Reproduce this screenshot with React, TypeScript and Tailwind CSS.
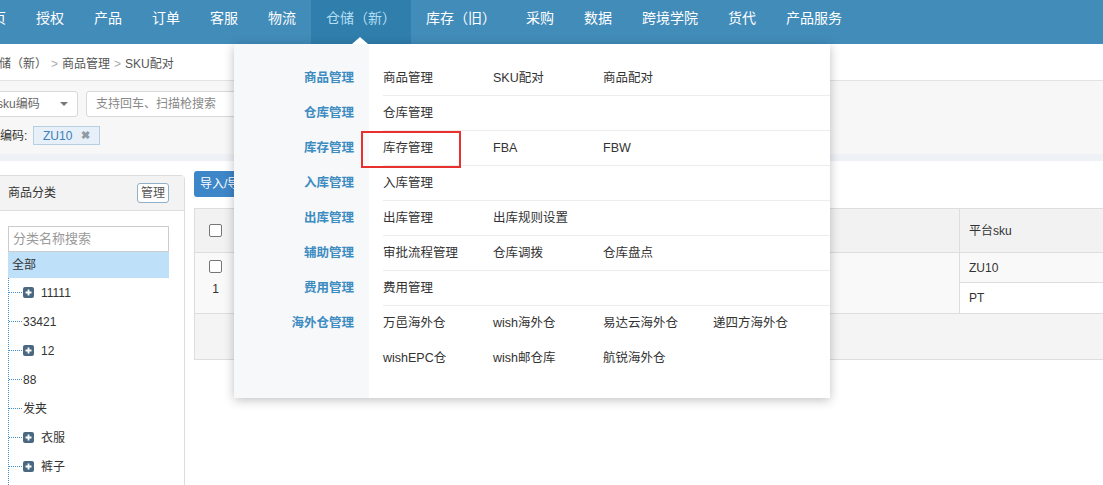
import { useState } from "react";

const navItems = ["首页", "授权", "产品", "订单", "客服", "物流", "仓储（新）", "库存（旧）", "采购", "数据", "跨境学院", "货代", "产品服务"];

const menuGroups = [
  { label: "商品管理", items: ["商品管理", "SKU配对", "商品配对"] },
  { label: "仓库管理", items: ["仓库管理"] },
  { label: "库存管理", items: ["库存管理", "FBA", "FBW"] },
  { label: "入库管理", items: ["入库管理"] },
  { label: "出库管理", items: ["出库管理", "出库规则设置"] },
  { label: "辅助管理", items: ["审批流程管理", "仓库调拨", "仓库盘点"] },
  { label: "费用管理", items: ["费用管理"] },
  { label: "海外仓管理", items: ["万邑海外仓", "wish海外仓", "易达云海外仓", "递四方海外仓", "wishEPC仓", "wish邮仓库", "航锐海外仓"] },
];

const treeItems = [
  { name: "11111", plus: true },
  { name: "33421", plus: false },
  { name: "12", plus: true },
  { name: "88", plus: false },
  { name: "发夹", plus: false },
  { name: "衣服", plus: true },
  { name: "裤子", plus: true },
];

function PlusBox() {
  return (
    <span className="w-[11px] h-[11px] rounded-[2px] bg-[#4a6882] flex items-center justify-center">
      <svg width="7" height="7" viewBox="0 0 7 7">
        <path d="M3.5 0.5v6M0.5 3.5h6" stroke="white" strokeWidth="1.8" />
      </svg>
    </span>
  );
}

function Checkbox() {
  return <span className="block w-[13px] h-[13px] rounded-[2px] border border-[#767676] bg-white" />;
}

function Dropdown() {
  return (
    <div className="absolute left-[234px] top-[44px] z-20 w-[596px] bg-[linear-gradient(90deg,#f7f8fa_135px,#ffffff_135px)] pt-[17px] pb-[22px] shadow-[0_2px_10px_rgba(0,0,0,0.25)]">
      <span className="absolute -top-[7px] left-[118px] w-0 h-0 border-l-[8px] border-r-[8px] border-b-[7px] border-l-transparent border-r-transparent border-b-white" />
      {menuGroups.map((g, gi) => {
        const last = gi === menuGroups.length - 1;
        return (
          <div key={g.label} className="flex items-start">
            <div className="w-[135px] shrink-0 h-[35px] flex items-center justify-end pr-[15px] text-[12.5px] font-bold text-[#3d8cc1]">
              {g.label}
            </div>
            <div className={"flex-1 ml-[14px] flex flex-wrap " + (last ? "" : "border-b border-[#ececec]")}>
              {g.items.map((it) => (
                <div
                  key={it}
                  className={
                    "relative w-[110px] flex items-center text-[12.5px] text-[#333] " +
                    (last ? "h-[35px]" : "h-[34px]")
                  }
                >
                  {it}
                  {gi === 2 && it === "库存管理" && (
                    <span className="absolute -left-[22px] top-[0px] w-[100px] h-[37px] border-2 border-[#e8312f]" />
                  )}
                </div>
              ))}
            </div>
          </div>
        );
      })}
    </div>
  );
}

export default function App() {
  const [active] = useState("仓储（新）");

  return (
    <div className="relative w-[1103px] h-[485px] overflow-hidden bg-white font-['Liberation_Sans','Noto_Sans_CJK_SC',sans-serif]">
      {/* top nav */}
      <div className="h-[44px] bg-[#428cba] flex">
        <div className="flex -ml-[37px] h-full">
          {navItems.map((n) => (
            <div
              key={n}
              className={
                "h-full px-[15px] pt-[8px] text-[14px] leading-[20px] whitespace-nowrap " +
                (n === active ? "bg-[#2f7eac] text-[#b4def4]" : "text-white")
              }
            >
              {n}
            </div>
          ))}
        </div>
      </div>

      {/* breadcrumb */}
      <div className="h-[37px] border-b border-[#e3e3e3] flex items-center pt-[3px] -ml-[13px] text-[12px] text-[#555] gap-[4px]">
        <span>仓储（新）</span>
        <span className="text-[#aaa]">&gt;</span>
        <span>商品管理</span>
        <span className="text-[#aaa]">&gt;</span>
        <span>SKU配对</span>
      </div>

      {/* filters */}
      <div className="bg-[#f7f7f7] h-[73px] pt-[10px]">
        <div className="flex items-center gap-[8px]">
          <div className="-ml-[12px] w-[90px] h-[26px] bg-white border border-[#d9d9d9] rounded-[3px] flex items-center justify-between pl-[8px] pr-[9px] text-[12px] text-[#666]">
            <span>sku编码</span>
            <span className="w-0 h-0 border-l-[4px] border-r-[4px] border-t-[4px] border-l-transparent border-r-transparent border-t-[#777]" />
          </div>
          <div className="w-[240px] h-[26px] bg-white border border-[#d9d9d9] rounded-[3px] flex items-center pl-[9px] text-[12px] text-[#888]">
            支持回车、扫描枪搜索
          </div>
        </div>
        <div className="flex items-center mt-[9px] text-[12px] text-[#333]">
          <span className="w-[33px]">编码:</span>
          <span className="h-[19px] w-[67px] flex items-center justify-between px-[9px] bg-[#e7f0f8] border border-[#b8cfe2] text-[#3b80b8]">
            <span>ZU10</span>
            <span className="text-[#8f9aa3] text-[11px] font-bold">✖</span>
          </span>
        </div>
      </div>
      <div className="h-[7px] bg-[#eef1f6]" />

      {/* content */}
      <div className="flex items-start">
        {/* left tree panel */}
        <div className="mt-[14px] -ml-[10px] w-[195px] h-[320px] border border-[#dddddd] rounded-tr-[4px] shrink-0">
          <div className="h-[35px] bg-[#f3f3f3] border-b border-[#dddddd] flex items-center justify-between pl-[17px] pr-[15px] text-[12px] text-[#333]">
            <span>商品分类</span>
            <span className="w-[32px] h-[20px] border border-[#8eb0cb] rounded-[3px] bg-white flex items-center justify-center text-[#555]">管理</span>
          </div>
          <div className="pl-[17px] pr-[15px] pt-[15px]">
            <div className="h-[26px] border border-[#cccccc] flex items-center pl-[4px] text-[13px] text-[#9a9a9a]">分类名称搜索</div>
            <div className="h-[26px] bg-[#bfe0f9] flex items-center pl-[4px] text-[12px] text-[#333]">全部</div>
            <div className="border-l border-dotted border-[#3f8fd2] pb-[20px]">
              {treeItems.map((t) => (
                <div key={t.name} className="h-[29px] flex items-center text-[12px] text-[#333]">
                  <span className="w-[13px] border-t border-dotted border-[#3f8fd2]" />
                  {t.plus ? (
                    <>
                      <span className="ml-[1px]"><PlusBox /></span>
                      <span className="ml-[7px]">{t.name}</span>
                    </>
                  ) : (
                    <span className="ml-[1px]">{t.name}</span>
                  )}
                </div>
              ))}
            </div>
          </div>
        </div>

        {/* right */}
        <div className="ml-[9px] mt-[10px] flex-1 min-w-0">
          <div className="h-[26px] w-[80px] rounded-[3px] bg-[#3d86c8] text-white text-[12px] flex items-center pl-[6px]">导入/导出</div>
          <div className="mt-[11px] w-[1000px] border border-[#dddddd] text-[12px] text-[#333]">
            <div className="flex h-[44px] bg-[#f2f2f2] border-b border-[#dddddd]">
              <div className="w-[41px] flex items-center justify-center"><Checkbox /></div>
              <div className="w-[724px] border-r border-[#dddddd]" />
              <div className="flex-1 flex items-center pl-[9px]">平台sku</div>
            </div>
            <div className="flex h-[61px] border-b border-[#dddddd]">
              <div className="w-[41px] bg-[#f9f9f9] flex flex-col items-center pt-[7px]">
                <Checkbox />
                <span className="mt-[7px]">1</span>
              </div>
              <div className="w-[724px] bg-[#f9f9f9] border-r border-[#dddddd]" />
              <div className="flex-1 flex flex-col">
                <div className="h-[30px] bg-[#f9f9f9] border-b border-[#dddddd] flex items-center pl-[9px]">ZU10</div>
                <div className="flex-1 bg-white flex items-center pl-[9px]">PT</div>
              </div>
            </div>
            <div className="h-[45px] bg-[#f4f4f4]" />
          </div>
        </div>
      </div>

      <Dropdown />
    </div>
  );
}
